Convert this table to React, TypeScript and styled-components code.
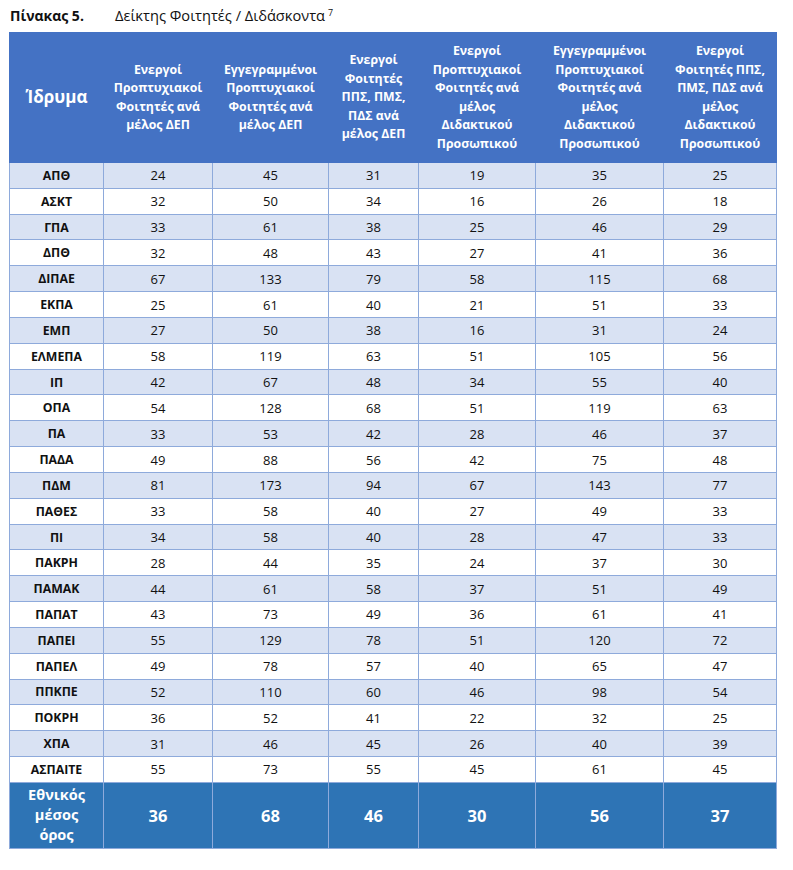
import React from "react";
import styled, { createGlobalStyle } from "styled-components";

const Global = createGlobalStyle`
  html, body { margin: 0; padding: 0; background: #ffffff; }
  body { font-family: "Open Sans", "Noto Sans", sans-serif; color: #000; }
`;

const Page = styled.div`
  padding: 0 0 0 9px;
  width: 784px;
`;

const Caption = styled.div`
  display: flex;
  align-items: center;
  height: 30px;
  padding-left: 1px;
  color: #111;
`;

const CaptionLabel = styled.span`
  font-weight: 700;
  width: 105px;
  font-size: 14px;
`;

const CaptionText = styled.span`
  font-size: 14.6px;
  sup { font-size: 9px; vertical-align: 5px; margin-left: 3px; }
`;

const Table = styled.table`
  border-collapse: collapse;
  table-layout: fixed;
  width: 767px;
  margin-top: 2px;
`;

const HeadRow = styled.tr`
  background: #4472c4;
  height: 130px;
`;

const HeadCell = styled.th<{ $big?: boolean }>`
  color: #fff;
  font-weight: 700;
  font-size: ${(p) => (p.$big ? "17px" : "12.3px")};
  line-height: 18.5px;
  text-align: center;
  vertical-align: middle;
  padding: 0 2px;
  border: 1px solid #4472c4;
  white-space: nowrap;
`;

const Row = styled.tr<{ $alt: boolean }>`
  background: ${(p) => (p.$alt ? "#d9e2f3" : "#ffffff")};
  height: 25.83px;
`;

const NameCell = styled.td`
  font-weight: 700;
  font-size: 12.3px;
  text-align: center;
  border: 1px solid #8eaadb;
  padding: 0;
  color: #111;
`;

const ValueCell = styled.td`
  font-size: 13px;
  text-align: center;
  border: 1px solid #8eaadb;
  padding: 0;
  color: #111;
`;

const FootRow = styled.tr`
  background: #2e74b5;
  height: 66px;
`;

const FootName = styled.td`
  color: #fff;
  font-weight: 700;
  font-size: 14.5px;
  line-height: 20px;
  text-align: center;
  border: 1px solid #8eaadb;
  padding: 0;
`;

const FootValue = styled.td`
  color: #fff;
  font-weight: 700;
  font-size: 16.5px;
  text-align: center;
  border: 1px solid #8eaadb;
  padding: 0;
`;

const widths = [94, 109, 116, 90, 117, 128, 113];

const headers: string[][] = [
  ["Ενεργοί", "Προπτυχιακοί", "Φοιτητές ανά", "μέλος ΔΕΠ"],
  ["Εγγεγραμμένοι", "Προπτυχιακοί", "Φοιτητές ανά", "μέλος ΔΕΠ"],
  ["Ενεργοί", "Φοιτητές", "ΠΠΣ, ΠΜΣ,", "ΠΔΣ ανά", "μέλος ΔΕΠ"],
  ["Ενεργοί", "Προπτυχιακοί", "Φοιτητές ανά", "μέλος", "Διδακτικού", "Προσωπικού"],
  ["Εγγεγραμμένοι", "Προπτυχιακοί", "Φοιτητές ανά", "μέλος", "Διδακτικού", "Προσωπικού"],
  ["Ενεργοί", "Φοιτητές ΠΠΣ,", "ΠΜΣ, ΠΔΣ ανά", "μέλος", "Διδακτικού", "Προσωπικού"],
];

const rows: [string, number[]][] = [
  ["ΑΠΘ", [24, 45, 31, 19, 35, 25]],
  ["ΑΣΚΤ", [32, 50, 34, 16, 26, 18]],
  ["ΓΠΑ", [33, 61, 38, 25, 46, 29]],
  ["ΔΠΘ", [32, 48, 43, 27, 41, 36]],
  ["ΔΙΠΑΕ", [67, 133, 79, 58, 115, 68]],
  ["ΕΚΠΑ", [25, 61, 40, 21, 51, 33]],
  ["ΕΜΠ", [27, 50, 38, 16, 31, 24]],
  ["ΕΛΜΕΠΑ", [58, 119, 63, 51, 105, 56]],
  ["ΙΠ", [42, 67, 48, 34, 55, 40]],
  ["ΟΠΑ", [54, 128, 68, 51, 119, 63]],
  ["ΠΑ", [33, 53, 42, 28, 46, 37]],
  ["ΠΑΔΑ", [49, 88, 56, 42, 75, 48]],
  ["ΠΔΜ", [81, 173, 94, 67, 143, 77]],
  ["ΠΑΘΕΣ", [33, 58, 40, 27, 49, 33]],
  ["ΠΙ", [34, 58, 40, 28, 47, 33]],
  ["ΠΑΚΡΗ", [28, 44, 35, 24, 37, 30]],
  ["ΠΑΜΑΚ", [44, 61, 58, 37, 51, 49]],
  ["ΠΑΠΑΤ", [43, 73, 49, 36, 61, 41]],
  ["ΠΑΠΕΙ", [55, 129, 78, 51, 120, 72]],
  ["ΠΑΠΕΛ", [49, 78, 57, 40, 65, 47]],
  ["ΠΠΚΠΕ", [52, 110, 60, 46, 98, 54]],
  ["ΠΟΚΡΗ", [36, 52, 41, 22, 32, 25]],
  ["ΧΠΑ", [31, 46, 45, 26, 40, 39]],
  ["ΑΣΠΑΙΤΕ", [55, 73, 55, 45, 61, 45]],
];

const averages = [36, 68, 46, 30, 56, 37];

export default function App() {
  return (
    <>
      <Global />
      <Page>
        <Caption>
          <CaptionLabel>Πίνακας 5.</CaptionLabel>
          <CaptionText>
            Δείκτης Φοιτητές / Διδάσκοντα<sup>7</sup>
          </CaptionText>
        </Caption>
        <Table>
          <colgroup>
            {widths.map((w, i) => (
              <col key={i} style={{ width: w }} />
            ))}
          </colgroup>
          <thead>
            <HeadRow>
              <HeadCell $big>Ίδρυμα</HeadCell>
              {headers.map((lines, i) => (
                <HeadCell key={i}>
                  {lines.map((l, j) => (
                    <React.Fragment key={j}>
                      {j > 0 && <br />}
                      {l}
                    </React.Fragment>
                  ))}
                </HeadCell>
              ))}
            </HeadRow>
          </thead>
          <tbody>
            {rows.map(([name, vals], i) => (
              <Row key={name} $alt={i % 2 === 0}>
                <NameCell>{name}</NameCell>
                {vals.map((v, j) => (
                  <ValueCell key={j}>{v}</ValueCell>
                ))}
              </Row>
            ))}
            <FootRow>
              <FootName>
                Εθνικός
                <br />
                μέσος
                <br />
                όρος
              </FootName>
              {averages.map((v, j) => (
                <FootValue key={j}>{v}</FootValue>
              ))}
            </FootRow>
          </tbody>
        </Table>
      </Page>
    </>
  );
}
